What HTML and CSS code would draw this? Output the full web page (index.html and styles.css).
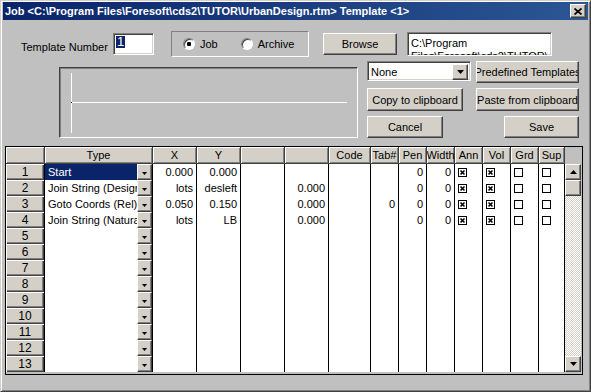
FILE: index.html
```html
<!DOCTYPE html>
<html lang="en">
<head>
  <meta charset="UTF-8" />
  <title>Job Template</title>
  <link rel="stylesheet" href="styles.css">
</head>
<body>
  <div class="window">
    <div class="titlebar">
      <span class="title">Job &lt;C:\Program Files\Foresoft\cds2\TUTOR\UrbanDesign.rtm&gt; Template &lt;1&gt;</span>
      <div class="close-btn">
        <svg width="8" height="7" viewBox="0 0 8 7"><path d="M0.5 0.5L7.5 6.5M7.5 0.5L0.5 6.5" stroke="#000" stroke-width="1.7"/></svg>
      </div>
    </div>

    <div class="top-row">
      <label class="tpl-label">Template Number</label>
      <div class="field tpl-input"><span class="sel">1</span></div>
      <div class="radio-group">
        <span class="radio checked"></span><span class="radio-text">Job</span>
        <span class="radio second"></span><span class="radio-text">Archive</span>
      </div>
      <div class="btn browse">Browse</div>
      <div class="field path-box">C:\Program<br>Files\Foresoft\cds2\TUTOR\</div>
    </div>

    <div class="mid-row">
      <div class="preview">
        <svg width="297" height="69" viewBox="0 0 297 69">
          <line x1="11.5" y1="5" x2="11.5" y2="65" stroke="#fff" />
          <line x1="11" y1="34.5" x2="287" y2="34.5" stroke="#fff" />
          <rect x="11" y="34" width="1" height="1" fill="#000" />
        </svg>
      </div>
      <div class="actions">
        <div class="field combo">
          <span class="combo-text">None</span>
          <span class="btn combo-arrow"><svg width="7" height="4" viewBox="0 0 7 4"><path d="M0 0H7L3.5 4Z" fill="#000"/></svg></span>
        </div>
        <div class="btn">Predefined Templates</div>
        <div class="btn copy">Copy to clipboard</div>
        <div class="btn">Paste from clipboard</div>
        <div class="btn cancel">Cancel</div>
        <div class="btn save">Save</div>
      </div>
    </div>

    <div class="grid-wrap">
      <div class="sheet" id="sheet">
        <div class="hcell"></div>
        <div class="hcell">Type</div>
        <div class="hcell">X</div>
        <div class="hcell">Y</div>
        <div class="hcell"></div>
        <div class="hcell"></div>
        <div class="hcell">Code</div>
        <div class="hcell">Tab#</div>
        <div class="hcell">Pen</div>
        <div class="hcell">Width</div>
        <div class="hcell">Ann</div>
        <div class="hcell">Vol</div>
        <div class="hcell">Grd</div>
        <div class="hcell">Sup</div>
        <div class="hcell empty"></div>
        <div class="scroll">
          <div class="btn sb-btn"><svg width="7" height="4" viewBox="0 0 7 4"><path d="M0 4H7L3.5 0Z" fill="#000"/></svg></div>
          <div class="btn sb-thumb"></div>
          <div class="sb-track"></div>
          <div class="btn sb-btn"><svg width="7" height="4" viewBox="0 0 7 4"><path d="M0 0H7L3.5 4Z" fill="#000"/></svg></div>
        </div>
      </div>
    </div>
  </div>

  <script>
    const rows = [
      { type: "Start", sel: true, vals: ["0.000", "0.000", "", "", "", "", "0", "0"], checks: [1, 1, 0, 0] },
      { type: "Join String (Design)", vals: ["lots", "desleft", "", "0.000", "", "", "0", "0"], checks: [1, 1, 0, 0] },
      { type: "Goto Coords (Rel)", vals: ["0.050", "0.150", "", "0.000", "", "0", "0", "0"], checks: [1, 1, 0, 0] },
      { type: "Join String (Natural)", vals: ["lots", "LB", "", "0.000", "", "", "0", "0"], checks: [1, 1, 0, 0] }
    ];

    const arrow = '<svg width="5" height="3" viewBox="0 0 5 3"><path d="M0 0H5L2.5 3Z" fill="#000"/></svg>';
    const boxOn = '<svg width="9" height="9" viewBox="0 0 9 9"><rect x="0.5" y="0.5" width="8" height="8" fill="#fff" stroke="#000"/><path d="M2.5 2.5L6.5 6.5M6.5 2.5L2.5 6.5" stroke="#000" stroke-width="1.6"/></svg>';
    const boxOff = '<svg width="9" height="9" viewBox="0 0 9 9"><rect x="0.5" y="0.5" width="8" height="8" fill="#fff" stroke="#000"/></svg>';

    const sheet = document.getElementById("sheet");
    let html = "";
    for (let i = 0; i < 13; i++) {
      const r = rows[i] || { type: "", vals: ["", "", "", "", "", "", "", ""], checks: null };
      html += `<div class="rh">${i + 1}</div>`;
      html += `<div class="cell type-cell"><span class="type-text${r.sel ? " selected" : ""}">${r.type}</span><span class="btn dd">${arrow}</span></div>`;
      r.vals.forEach(v => { html += `<div class="cell">${v}</div>`; });
      for (let c = 0; c < 4; c++) {
        const mark = r.checks ? (r.checks[c] ? boxOn : boxOff) : "";
        html += `<div class="cell check-cell">${mark}</div>`;
      }
    }
    sheet.insertAdjacentHTML("beforeend", html);
  </script>
</body>
</html>
```

FILE: styles.css
```css
* {
  box-sizing: border-box;
}
body {
  margin: 0;
  font-family: "Liberation Sans", Arial, sans-serif;
  font-size: 11px;
  color: #000;
  background: #c0c0c0;
}
.window {
  width: 591px;
  height: 392px;
  padding: 1px 2px 2px;
  background: #c0c0c0;
  border: 1px solid;
  border-color: #d4d0c8 #404040 #404040 #d4d0c8;
  box-shadow: inset 1px 1px #fff, inset -1px -1px #808080;
  overflow: hidden;
}

/* title bar */
.titlebar {
  display: flex;
  align-items: center;
  height: 18px;
  padding-left: 2px;
  background: linear-gradient(90deg, #0a246a, #2b5694);
  color: #fff;
  font-weight: bold;
  white-space: nowrap;
}
.close-btn {
  margin-left: auto;
  margin-right: 2px;
  width: 16px;
  height: 14px;
  display: flex;
  align-items: center;
  justify-content: center;
  background: #d4d0c8;
  border: 1px solid;
  border-color: #fff #404040 #404040 #fff;
  box-shadow: inset -1px -1px #808080;
}

/* shared controls */
.btn {
  display: flex;
  align-items: center;
  justify-content: center;
  background: #d4d0c8;
  border: 1px solid;
  border-color: #fff #404040 #404040 #fff;
  box-shadow: inset -1px -1px #808080;
  white-space: nowrap;
  overflow: hidden;
}
.field {
  background: #fff;
  border: 1px solid;
  border-color: #808080 #fff #fff #808080;
  box-shadow: inset 1px 1px #404040, inset -1px -1px #d4d0c8;
}

/* top row */
.top-row {
  display: flex;
  align-items: center;
  height: 26px;
  margin-top: 11px;
}
.tpl-label {
  width: 92px;
  margin-left: 18px;
  padding-top: 6px;
}
.tpl-input {
  width: 41px;
  height: 22px;
  padding: 2px 0 0 2px;
}
.sel {
  display: inline-block;
  padding: 0 1px;
  background: #0a246a;
  color: #fff;
  font-size: 13px;
  line-height: 12px;
}
.radio-group {
  display: flex;
  align-items: center;
  width: 138px;
  height: 26px;
  margin-left: 17px;
  padding-left: 11px;
  border: 1px solid;
  border-color: #808080 #fff #fff #808080;
}
.radio {
  width: 12px;
  height: 12px;
  border-radius: 50%;
  background: #fff;
  border: 1px solid;
  border-color: #808080 #fff #fff #808080;
  box-shadow: inset 1px 1px #404040;
}
.radio.checked {
  background: radial-gradient(circle, #000 0 2px, #fff 2.5px);
}
.radio.second {
  margin-left: 23px;
}
.radio-text {
  margin-left: 5px;
}
.browse {
  width: 74px;
  height: 22px;
  margin-left: 14px;
}
.path-box {
  width: 145px;
  height: 24px;
  margin-left: 10px;
  padding: 4px 0 0 3px;
  line-height: 13px;
  white-space: nowrap;
  overflow: hidden;
}

/* preview + action buttons */
.mid-row {
  display: flex;
  align-items: flex-start;
  margin-top: 4px;
}
.preview {
  width: 299px;
  height: 71px;
  margin: 6px 0 0 56px;
  border: 1px solid;
  border-color: #404040 #fff #fff #404040;
  box-shadow: inset 1px 1px #808080;
}
.preview svg {
  display: block;
}
.actions {
  display: grid;
  grid-template-columns: 104px 103px;
  grid-template-rows: 22px 23px 22px;
  column-gap: 5px;
  row-gap: 5px;
  margin-left: 9px;
}
.combo {
  display: flex;
  height: 20px;
  padding: 2px;
}
.combo-text {
  flex: 1;
  padding-left: 1px;
  line-height: 16px;
}
.combo-arrow {
  width: 16px;
  height: 16px;
  flex: none;
}
.copy {
  width: 96px;
}
.cancel {
  width: 76px;
}
.save {
  width: 75px;
  justify-self: end;
}

/* spreadsheet */
.grid-wrap {
  width: 578px;
  height: 229px;
  margin: 8px 0 0 2px;
  border: 1px solid #000;
  background: #c0c0c0;
}
.sheet {
  display: grid;
  grid-template-columns: 39px 108px repeat(4, 44px) 42px repeat(6, 28px) 26px 16px;
  grid-template-rows: 17px repeat(13, 16px);
}
.hcell {
  display: flex;
  justify-content: center;
  align-items: center;
  background: #d4d0c8;
  border-right: 1px solid #404040;
  border-bottom: 1px solid #404040;
  box-shadow: inset 1px 1px #fff, inset -1px -1px #808080;
  white-space: nowrap;
  overflow: hidden;
}
.hcell.empty {
  background: #c0c0c0;
  border: none;
  box-shadow: none;
}
.rh {
  display: flex;
  justify-content: center;
  align-items: center;
  background: #d4d0c8;
  border-right: 1px solid #000;
  box-shadow: inset 1px 1px #fff, inset -1px -1px #404040, inset -2px -2px #808080;
  font-size: 12px;
}
.cell {
  background: #fff;
  border-right: 1px solid #000;
  padding-right: 3px;
  text-align: right;
  line-height: 16px;
  white-space: nowrap;
  overflow: hidden;
}
.type-cell {
  display: flex;
  padding: 0;
  text-align: left;
}
.type-text {
  flex: 1;
  padding-left: 3px;
  overflow: hidden;
}
.type-text.selected {
  background: #0a246a;
  color: #fff;
}
.dd {
  width: 15px;
  flex: none;
  padding-top: 2px;
}
.check-cell {
  display: flex;
  align-items: center;
  padding: 0 0 0 3px;
}
.check-cell svg {
  display: block;
}
.scroll {
  grid-column: 15;
  grid-row: 2 / span 13;
  display: flex;
  flex-direction: column;
}
.sb-btn {
  height: 16px;
  flex: none;
}
.sb-thumb {
  height: 16px;
  flex: none;
}
.sb-track {
  flex: 1;
  background: conic-gradient(#fff 25%, #d4d0c8 0 50%, #fff 0 75%, #d4d0c8 0);
  background-size: 2px 2px;
}
```
